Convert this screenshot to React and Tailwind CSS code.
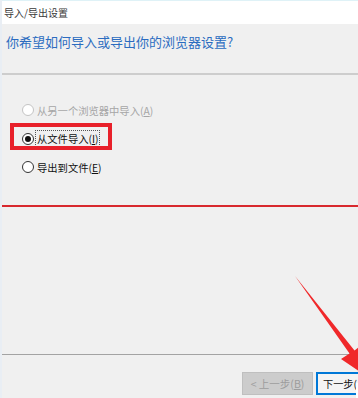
const font = { fontFamily: '"Noto Sans CJK SC", "Liberation Sans", sans-serif' };

const options = [
  { label: "从另一个浏览器中导入", key: "A", disabled: true },
  { label: "从文件导入", key: "I", checked: true, focused: true },
  { label: "导出到文件", key: "E" },
];

function Radio({ label, hotkey, checked, disabled, focused }) {
  return (
    <div className="flex items-center h-[28.5px]">
      <span
        className={
          "w-[12px] h-[12px] rounded-full border flex items-center justify-center bg-white " +
          (disabled ? "border-[#c4c4c4]" : "border-[#333]")
        }
      >
        {checked && <span className="w-[6px] h-[6px] rounded-full bg-[#111]" />}
      </span>
      <span
        className={
          "ml-[1px] px-[1px] text-[10.3px] leading-[15px] border border-dotted " +
          (focused ? "border-[#555]" : "border-transparent") +
          (disabled ? " text-[#a6a6a6]" : " text-[#111]")
        }
      >
        {label}(<span className="underline">{hotkey}</span>)
      </span>
    </div>
  );
}

export default function App() {
  return (
    <div
      className="relative w-[358px] h-[398px] overflow-hidden bg-[#f0f0f0] flex flex-col border-l-2 border-[#e9eef4]"
      style={font}
    >
      <div className="h-[24px] bg-white border-t border-[#dff2f7] flex items-center pl-[2px] text-[10px] text-[#3a3a3a]">
        导入/导出设置
      </div>

      <div className="h-[49px] pl-[4px] pt-[9px] text-[13px] leading-[18px] text-[#2b6cc0]">
        你希望如何导入或导出你的浏览器设置?
      </div>
      <div className="h-[2px] bg-[#cdcdcd]" />

      <div className="pl-[20px] pt-[21px]">
        {options.map((o) => (
          <Radio
            key={o.key}
            label={o.label}
            hotkey={o.key}
            checked={o.checked}
            disabled={o.disabled}
            focused={o.focused}
          />
        ))}
      </div>

      <div className="mt-[23px] h-[2px] bg-[#d8282e]" />

      <div className="flex-1" />
      <div className="h-px bg-[#a3a3a3]" />
      <div className="h-[43px] flex items-start justify-end pt-[17px] gap-[3px]">
        <div className="w-[71px] h-[23px] bg-[#cccccc] border border-[#bfbfbf] flex items-center justify-center text-[10.5px] text-[#9d9d9d]">
          &lt; 上一步(<span className="underline">B</span>)
        </div>
        <div className="w-[42px] h-[23px] shrink-0 border-y-2 border-l-2 border-[#0078d7] bg-[#f4f4f4] flex items-center pl-[5px] text-[10.2px] text-[#111] whitespace-nowrap">
          下一步(
        </div>
      </div>

      <div className="absolute left-[8px] top-[123px] w-[102px] h-[27px] border-4 border-[#e8202a] pointer-events-none" />

      <svg className="absolute left-0 top-0 pointer-events-none" width="358" height="398" viewBox="0 0 358 398">
        <rect x="354" y="383" width="6" height="16" fill="#ffffff" />
        <polygon
          points="293,276 352.5,350.4 361,344 367,378 339,359 347.5,353.6"
          fill="#f0282a"
        />
      </svg>
    </div>
  );
}
